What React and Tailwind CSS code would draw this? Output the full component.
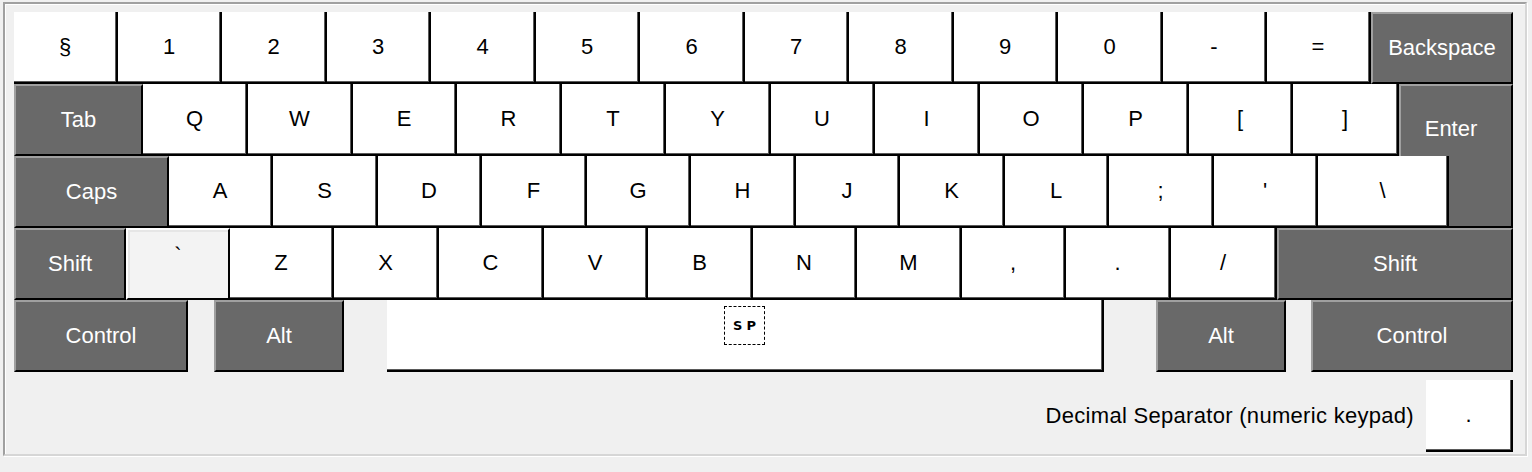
import React from 'react';

// key rows: [label, width, kind]  kind: 'w' white, 'd' dark, 'l' light grey
const row1 = [
    ['§', 104], ['1', 104], ['2', 105], ['3', 104], ['4', 105], ['5', 104], ['6', 105],
    ['7', 104], ['8', 105], ['9', 104], ['0', 105], ['-', 104], ['=', 104], ['Backspace', 142, 'd'],
];

const row2 = [
    ['Tab', 129, 'd'], ['Q', 105], ['W', 105], ['E', 104], ['R', 105], ['T', 104], ['Y', 105],
    ['U', 104], ['I', 105], ['O', 104], ['P', 105], ['[', 104], [']', 106],
];

const row3 = [
    ['Caps', 155, 'd'], ['A', 104], ['S', 105], ['D', 104], ['F', 105], ['G', 104], ['H', 105],
    ['J', 104], ['K', 105], ['L', 104], [';', 105], ["'", 104], ['\\', 131],
];

const row4 = [
    ['Shift', 112, 'd'], ['`', 104, 'l'], ['Z', 104], ['X', 105], ['C', 105], ['V', 104], ['B', 105],
    ['N', 104], ['M', 105], [',', 104], ['.', 105], ['/', 106], ['Shift', 236, 'd'],
];

const base = 'shrink-0 flex items-center justify-center h-[72px] text-[22px] leading-none';

const kinds = {
    w: 'bg-white text-black border-r-2 border-b-2 border-black shadow-[inset_-1px_-1px_0_#5a5a5a]',
    d: 'bg-[#696969] text-white border-2 border-t-[#a0a0a0] border-l-[#a0a0a0] border-r-black border-b-black',
    l: 'bg-[#f3f3f3] text-black border-2 border-t-white border-l-white border-r-black border-b-black shadow-[inset_2px_2px_0_#e6e6e6]',
};

function Key({ label, w, kind = 'w', className = '', children }) {
    return (
        <div className={`${base} ${kinds[kind]} ${className}`} style={{ width: w }}>
            {children ?? (kind === 'l' ? <span className="-mt-4">{label}</span> : label)}
        </div>
    );
}

function Row({ keys, children }) {
    return (
        <div className="flex">
            {keys.map(([label, w, kind], i) => (
                <Key key={i} label={label} w={w} kind={kind} />
            ))}
            {children}
        </div>
    );
}

export default function App() {
    return (
        <div className="w-[1532px] h-[472px] bg-[#f0f0f0] pt-[2px] pl-[3px] font-['Liberation_Sans',Arial,sans-serif] overflow-hidden">
            <div className="w-[1524px] h-[454px] border-2 border-[#a0a0a0] border-r-[#d6d6d6] border-b-[#d6d6d6] shadow-[1px_1px_0_#ffffff,inset_1px_1px_0_#ffffff] pl-[9px] pt-[8px]">

                {/* main keys */}
                <Row keys={row1} />

                <Row keys={row2}>
                    {/* Enter, upper part */}
                    <div className="shrink-0 w-[114px] h-[72px] bg-[#696969] border-t-2 border-l-2 border-r-2 border-t-[#a0a0a0] border-l-[#a0a0a0] border-r-black flex items-center justify-center pt-4 pr-[10px] text-[22px] leading-none text-white">
                        Enter
                    </div>
                </Row>

                <Row keys={row3}>
                    {/* Enter, lower part */}
                    <div className="shrink-0 w-[64px] h-[72px] bg-[#696969] border-r-2 border-b-2 border-black" />
                </Row>

                <Row keys={row4} />

                <div className="flex">
                    <Key label="Control" w={174} kind="d" />
                    <Key label="Alt" w={130} kind="d" className="ml-[26px]" />
                    <Key w={717} className="ml-[43px] !items-start pt-[6px]">
                        <div className="w-[41px] h-[39px] border border-dashed border-black flex items-center justify-center">
                            <span className="text-[13px] font-bold tracking-[4px] pl-[4px] font-['DejaVu_Sans',sans-serif]">SP</span>
                        </div>
                    </Key>
                    <Key label="Alt" w={130} kind="d" className="ml-[52px]" />
                    <Key label="Control" w={202} kind="d" className="ml-[25px]" />
                </div>

                {/* decimal separator */}
                <div className="flex items-center justify-end mt-[8px] w-[1499px]">
                    <span className="text-[22px] leading-none tracking-[0.3px] text-black mr-[12px]">Decimal Separator (numeric keypad)</span>
                    <Key label="." w={87} />
                </div>
            </div>
        </div>
    );
}
